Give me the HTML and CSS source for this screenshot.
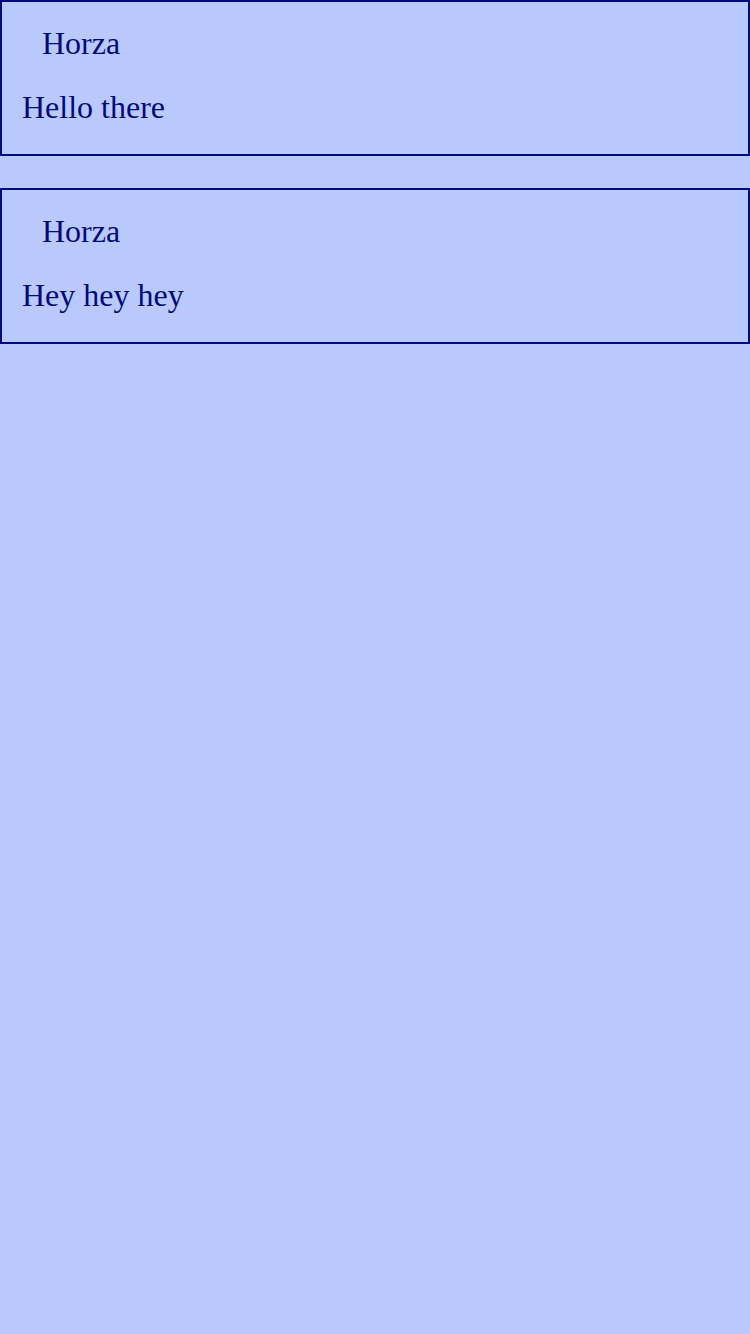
FILE: index.html
```html
<!DOCTYPE html>
<html>
<head>
<meta charset="utf-8">
<link rel="stylesheet" href="styles.css">
</head>
<body>
  <div class="feed">
    <div class="card">
      <div class="author">Horza</div>
      <div class="message">Hello there</div>
    </div>
    <div class="card">
      <div class="author">Horza</div>
      <div class="message">Hey hey hey</div>
    </div>
  </div>
</body>
</html>
```
FILE: styles.css
```css
html, body {
  margin: 0;
  padding: 0;
  background: #b9c9fd;
}
body {
  min-height: 1334px;
  font-family: "Liberation Serif", "Times New Roman", serif;
  font-size: 32px;
  line-height: 37px;
  color: #000a7a;
}
.feed {
  display: flex;
  flex-direction: column;
  gap: 32px;
}
.card {
  border: 2px solid #000a80;
  padding: 23px 20px 28px;
  display: flex;
  flex-direction: column;
  gap: 27px;
}
.author {
  padding-left: 20px;
}
```
